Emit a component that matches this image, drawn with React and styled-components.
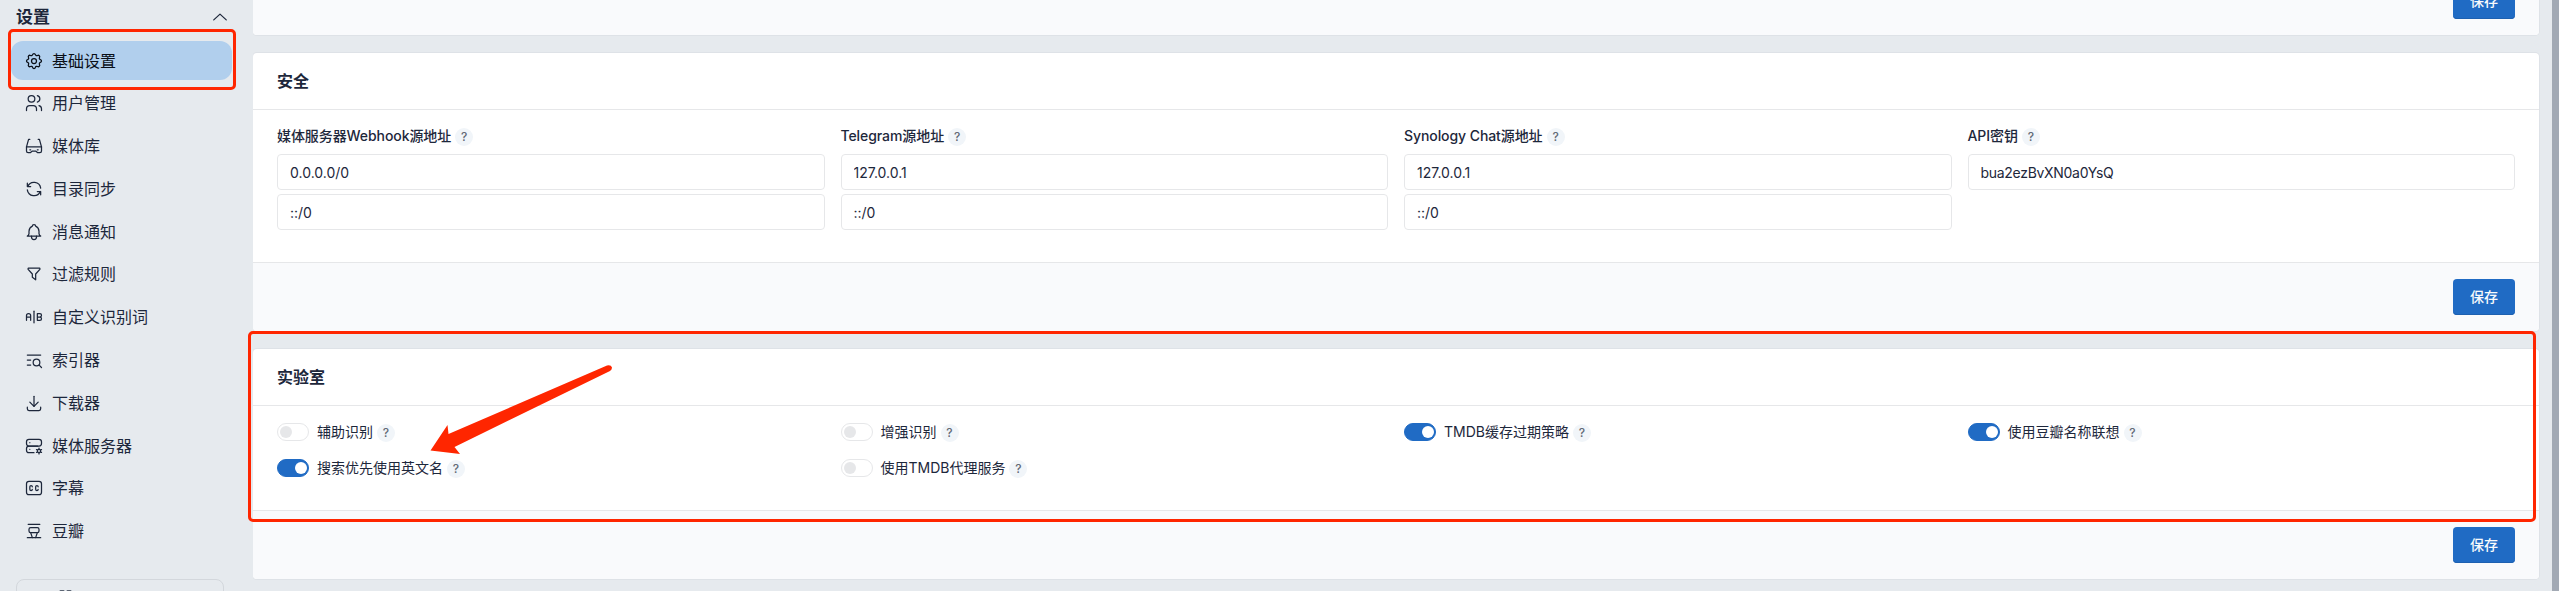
import React from 'react';
import styled, { createGlobalStyle } from 'styled-components';

const fontFamily = 'Inter, "Noto Sans CJK SC", sans-serif';
const colorText = '#1d273b';
const colorPrimary = '#206bc4';
const colorBorder = '#e6e7e9';
const colorMark = '#ff2600';

const GlobalStyle = createGlobalStyle`
  * {
    box-sizing: border-box;
  }

  body {
    margin: 0;
    background: #e6eaee;
    font-family: ${fontFamily};
    font-size: 14px;
    line-height: 20px;
    color: ${colorText};
    overflow: hidden;
  }
`;

const Page = styled.div`
  position: relative;
  display: flex;
  height: 591px;
  overflow: hidden;
`;

const Sidebar = styled.aside`
  flex: 0 0 253px;
  height: 591px;
  padding: 5px 0 0 11px;
  overflow: hidden;
`;

const SidebarHeader = styled.div`
  display: flex;
  align-items: center;
  justify-content: space-between;
  height: 24px;
  padding: 0 23px 0 5px;
  font-size: 17px;
  font-weight: 600;
`;

const Menu = styled.ul`
  display: flex;
  flex-direction: column;
  margin: 10px 0 0;
  padding: 0;
  list-style: none;
`;

const MenuItem = styled.li`
  height: 42.8px;
  padding: 2px 0;
`;

const MenuLink = styled.a`
  display: flex;
  align-items: center;
  gap: 8px;
  width: 221px;
  height: 39px;
  padding-left: 13px;
  border-radius: 12px;
  font-size: 16px;
  color: ${({ $active }) => ($active ? '#0a0f18' : colorText)};
  background: ${({ $active }) => ($active ? '#b1cfed' : 'transparent')};
`;

const Icon = styled.svg`
  flex: none;
  width: 20px;
  height: 20px;
  fill: none;
  stroke: currentColor;
  stroke-width: 1.5;
  stroke-linecap: round;
  stroke-linejoin: round;
`;

const SidebarCard = styled.div`
  width: 208px;
  height: 60px;
  margin: 26px 0 0 5px;
  padding: 9px 0 0 41px;
  border: 1px solid #d3d7dc;
  border-radius: 8px;
`;

const SidebarCardIcon = styled.svg`
  display: block;
  width: 16px;
  height: 16px;
  fill: #5b6473;
`;

const Content = styled.main`
  display: flex;
  flex-direction: column;
  flex: 1;
  gap: 18px;
  height: 625px;
  margin-top: -34px;
  padding-right: 13px;
  overflow: hidden;
`;

const ScrollBar = styled.div`
  flex: 0 0 7px;
  background: #a2a9b4;
`;

const Card = styled.section`
  flex: none;
  background: #fff;
  border-radius: 4px;
  overflow: hidden;
  box-shadow: 0 0 0 1px rgba(98, 105, 118, 0.06);
`;

const CardHeader = styled.header`
  display: flex;
  align-items: center;
  height: 57px;
  padding: 0 24px;
  border-bottom: 1px solid ${colorBorder};
`;

const CardTitle = styled.h3`
  margin: 0;
  font-size: 16px;
  font-weight: 600;
  line-height: 24px;
`;

const CardBody = styled.div`
  display: grid;
  grid-template-columns: repeat(4, 1fr);
  align-content: start;
  column-gap: 16px;
  row-gap: ${({ $rowGap }) => $rowGap || 0}px;
  height: ${({ $height }) => $height}px;
  padding: ${({ $top }) => $top}px 24px 0;
`;

const CardFooter = styled.footer`
  display: flex;
  justify-content: flex-end;
  height: 69px;
  padding: 16px 24px 0;
  border-top: 1px solid ${colorBorder};
  background: #f9fafc;
`;

const SaveButton = styled.button`
  flex: none;
  width: 62px;
  height: 36px;
  padding: 0;
  border: 0;
  border-radius: 4px;
  background: ${colorPrimary};
  box-shadow: inset 0 -1px 0 #1d60b0;
  color: #f8fafc;
  font-family: ${fontFamily};
  font-size: 14px;
  font-weight: 500;
  line-height: 20px;
`;

const Field = styled.div`
  display: flex;
  flex-direction: column;
  gap: 4px;
`;

const FieldLabel = styled.label`
  display: flex;
  align-items: center;
  height: 20px;
  margin-bottom: 4px;
  font-weight: 500;
  letter-spacing: -0.08px;
`;

const Help = styled.span`
  display: inline-flex;
  align-items: center;
  justify-content: center;
  width: 18px;
  height: 18px;
  margin: 2px 0 0 4px;
  border-radius: 50%;
  background: #f1f5f9;
  color: #626976;
  font-size: 12px;
  font-weight: 500;
`;

const Input = styled.input`
  width: 100%;
  height: 36px;
  padding: 0 12px;
  border: 1px solid ${colorBorder};
  border-radius: 4px;
  background: #fff;
  color: ${colorText};
  font-family: ${fontFamily};
  font-size: 14px;
  letter-spacing: ${({ $tight }) => ($tight ? '-0.3px' : 'normal')};
`;

const SwitchRow = styled.label`
  display: flex;
  align-items: center;
  height: 18px;
`;

const SwitchTrack = styled.span`
  display: flex;
  align-items: center;
  justify-content: ${({ $on }) => ($on ? 'flex-end' : 'flex-start')};
  width: 32px;
  height: 18px;
  margin-right: 8px;
  padding: 0 ${({ $on }) => ($on ? 1 : 2)}px;
  border: 1px solid ${({ $on }) => ($on ? colorPrimary : colorBorder)};
  border-radius: 9px;
  background: ${({ $on }) => ($on ? colorPrimary : '#fff')};
`;

const SwitchKnob = styled.span`
  width: 12px;
  height: 12px;
  border-radius: 50%;
  background: ${({ $on }) => ($on ? '#fff' : colorBorder)};
`;

const MarkBox = styled.div`
  position: absolute;
  left: ${({ $left }) => $left}px;
  top: ${({ $top }) => $top}px;
  width: ${({ $width }) => $width}px;
  height: ${({ $height }) => $height}px;
  border: 3px solid ${colorMark};
  border-radius: 5px;
`;

const MarkArrow = styled.svg`
  position: absolute;
  left: 425px;
  top: 360px;
  width: 192px;
  height: 100px;
  fill: ${colorMark};
`;

const menu = [
  {
    label: '基础设置',
    icon: (
      <>
        <path d="M10.325 4.317c.426 -1.756 2.924 -1.756 3.35 0a1.724 1.724 0 0 0 2.573 1.066c1.543 -.94 3.31 .826 2.37 2.37a1.724 1.724 0 0 0 1.065 2.572c1.756 .426 1.756 2.924 0 3.35a1.724 1.724 0 0 0 -1.066 2.573c.94 1.543 -.826 3.31 -2.37 2.37a1.724 1.724 0 0 0 -2.572 1.065c-.426 1.756 -2.924 1.756 -3.35 0a1.724 1.724 0 0 0 -2.573 -1.066c-1.543 .94 -3.31 -.826 -2.37 -2.37a1.724 1.724 0 0 0 -1.065 -2.572c-1.756 -.426 -1.756 -2.924 0 -3.35a1.724 1.724 0 0 0 1.066 -2.573c-.94 -1.543 .826 -3.31 2.37 -2.37c1 .608 2.296 .07 2.572 -1.065z" />
        <circle cx="12" cy="12" r="3" />
      </>
    ),
  },
  {
    label: '用户管理',
    icon: (
      <>
        <circle cx="9" cy="7" r="4" />
        <path d="M3 21v-2a4 4 0 0 1 4 -4h4a4 4 0 0 1 4 4v2" />
        <path d="M16 3.13a4 4 0 0 1 0 7.75" />
        <path d="M21 21v-2a4 4 0 0 0 -3 -3.85" />
      </>
    ),
  },
  {
    label: '媒体库',
    icon: (
      <>
        <path d="M3 13v5a2 2 0 0 0 2 2h2.5l2.5 -2h4l2.5 2h2.5a2 2 0 0 0 2 -2v-5z" />
        <path d="M3 13l2.5 -9h1.5" />
        <path d="M21 13l-2.5 -9h-1.5" />
        <path d="M7 16.5h1" />
        <path d="M16 16.5h1" />
      </>
    ),
  },
  {
    label: '目录同步',
    icon: (
      <>
        <path d="M20 11a8.1 8.1 0 0 0 -15.5 -2m-.5 -4v4h4" />
        <path d="M4 13a8.1 8.1 0 0 0 15.5 2m.5 4v-4h-4" />
      </>
    ),
  },
  {
    label: '消息通知',
    icon: (
      <>
        <path d="M10 5a2 2 0 0 1 4 0a7 7 0 0 1 4 6v3a4 4 0 0 0 2 3h-16a4 4 0 0 0 2 -3v-3a7 7 0 0 1 4 -6" />
        <path d="M9 17v1a3 3 0 0 0 6 0v-1" />
      </>
    ),
  },
  {
    label: '过滤规则',
    icon: (
      <path d="M5.5 5h13a1 1 0 0 1 .5 1.5l-5 5.5v7l-4 -3v-4l-5 -5.5a1 1 0 0 1 .5 -1.5" />
    ),
  },
  {
    label: '自定义识别词',
    icon: (
      <>
        <path d="M3 16v-5.5a2.5 2.5 0 0 1 5 0v5.5m0 -4h-5" />
        <path d="M12 5v14" />
        <path d="M16 16v-8h3a2 2 0 0 1 0 4h-3m3 0a2 2 0 0 1 0 4h-3" />
      </>
    ),
  },
  {
    label: '索引器',
    icon: (
      <>
        <circle cx="15" cy="15" r="4" />
        <path d="M18.5 18.5l2.5 2.5" />
        <path d="M4 6h16" />
        <path d="M4 12h4" />
        <path d="M4 18h4" />
      </>
    ),
  },
  {
    label: '下载器',
    icon: (
      <>
        <path d="M4 17v2a2 2 0 0 0 2 2h12a2 2 0 0 0 2 -2v-2" />
        <path d="M7 11l5 5l5 -5" />
        <path d="M12 4v12" />
      </>
    ),
  },
  {
    label: '媒体服务器',
    icon: (
      <>
        <rect x="3" y="4" width="18" height="8" rx="3" />
        <path d="M12 20h-6a3 3 0 0 1 -3 -3v-2a3 3 0 0 1 3 -3h10.5" />
        <circle cx="18" cy="18" r="2" />
        <path d="M18 14.5v1.5" />
        <path d="M18 20v1.5" />
        <path d="M21.032 16.25l-1.299 .75" />
        <path d="M16.27 19l-1.3 .75" />
        <path d="M14.97 16.25l1.3 .75" />
        <path d="M19.733 19l1.3 .75" />
        <path d="M7 8v.01" />
        <path d="M7 16v.01" />
      </>
    ),
  },
  {
    label: '字幕',
    icon: (
      <>
        <rect x="3" y="4" width="18" height="16" rx="3" />
        <path d="M10 10.5a1.5 1.5 0 0 0 -3 0v3a1.5 1.5 0 0 0 3 0" />
        <path d="M17 10.5a1.5 1.5 0 0 0 -3 0v3a1.5 1.5 0 0 0 3 0" />
      </>
    ),
  },
  {
    label: '豆瓣',
    icon: (
      <>
        <path d="M4 20h16" />
        <path d="M5 4h14" />
        <path d="M8 8h8a2 2 0 0 1 2 2v2a2 2 0 0 1 -2 2h-8a2 2 0 0 1 -2 -2v-2a2 2 0 0 1 2 -2z" />
        <path d="M16 14l-2 6" />
        <path d="M8 14l2 6" />
      </>
    ),
  },
];

const fields = [
  { label: '媒体服务器Webhook源地址', values: ['0.0.0.0/0', '::/0'] },
  { label: 'Telegram源地址', values: ['127.0.0.1', '::/0'] },
  { label: 'Synology Chat源地址', values: ['127.0.0.1', '::/0'] },
  { label: 'API密钥', values: ['bua2ezBvXN0a0YsQ'], tight: true },
];

const switches = [
  { label: '辅助识别', on: false },
  { label: '增强识别', on: false },
  { label: 'TMDB缓存过期策略', on: true },
  { label: '使用豆瓣名称联想', on: true },
  { label: '搜索优先使用英文名', on: true },
  { label: '使用TMDB代理服务', on: false },
];

const Switch = ({ label, on }) => (
  <SwitchRow>
    <SwitchTrack $on={on}>
      <SwitchKnob $on={on} />
    </SwitchTrack>
    {label}
    <Help>?</Help>
  </SwitchRow>
);

const App = () => (
  <Page>
    <GlobalStyle />
    <Sidebar>
      <SidebarHeader>
        设置
        <Icon viewBox="0 0 24 24">
          <path d="M4.5 15.500l7.5 -7l7.5 7" />
        </Icon>
      </SidebarHeader>
      <Menu>
        {menu.map(({ label, icon }, index) => (
          <MenuItem key={label}>
            <MenuLink $active={index === 0}>
              <Icon viewBox="0 0 24 24">{icon}</Icon>
              {label}
            </MenuLink>
          </MenuItem>
        ))}
      </Menu>
      <SidebarCard>
        <SidebarCardIcon viewBox="0 0 16 16">
          <rect x="1.500" y="1" width="5" height="14" rx="1" />
          <rect x="8.500" y="1" width="5" height="14" rx="1" />
        </SidebarCardIcon>
      </SidebarCard>
    </Sidebar>
    <Content>
      <Card>
        <CardFooter>
          <SaveButton>保存</SaveButton>
        </CardFooter>
      </Card>
      <Card>
        <CardHeader>
          <CardTitle>安全</CardTitle>
        </CardHeader>
        <CardBody $height={152} $top={16}>
          {fields.map(({ label, values, tight }) => (
            <Field key={label}>
              <FieldLabel>
                {label}
                <Help>?</Help>
              </FieldLabel>
              {values.map(value => (
                <Input key={value} defaultValue={value} $tight={tight} />
              ))}
            </Field>
          ))}
        </CardBody>
        <CardFooter>
          <SaveButton>保存</SaveButton>
        </CardFooter>
      </Card>
      <Card>
        <CardHeader>
          <CardTitle>实验室</CardTitle>
        </CardHeader>
        <CardBody $height={104} $top={17} $rowGap={18}>
          {switches.map(({ label, on }) => (
            <Switch key={label} label={label} on={on} />
          ))}
        </CardBody>
        <CardFooter>
          <SaveButton>保存</SaveButton>
        </CardFooter>
      </Card>
    </Content>
    <ScrollBar />
    <MarkBox $left={8} $top={29} $width={228} $height={61} />
    <MarkBox $left={247.5} $top={331} $width={2288} $height={191} />
    <MarkArrow viewBox="425 360 192 100">
      <path d="M430.500 450.500 L447.500 425 L448.500 434 L607 365.500 Q611 364.500 612 367.500 Q612 369.500 610 371 L454.500 447 L460 454 Z" />
    </MarkArrow>
  </Page>
);

export default App;
